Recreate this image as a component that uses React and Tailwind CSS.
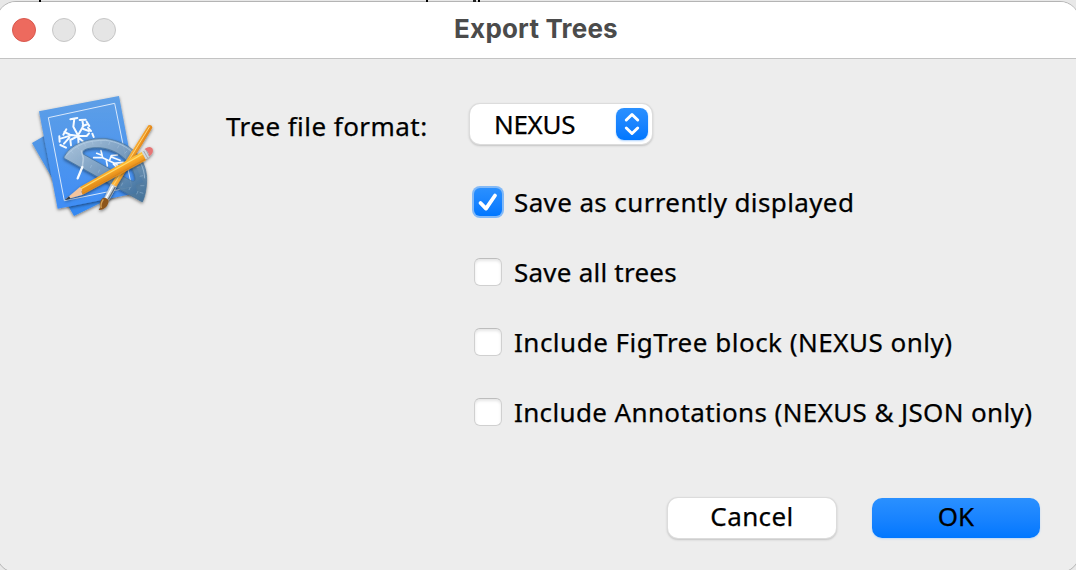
function AppIcon() {
  return (
    <svg className="block h-[145px] w-[150px]" viewBox="0 0 450 435" fill="none">
      <defs>
        <linearGradient id="sheet" x1="0" y1="0" x2="0" y2="1">
          <stop offset="0" stopColor="#5e9fe6" />
          <stop offset="1" stopColor="#3f8df5" />
        </linearGradient>
        <linearGradient id="back" x1="0" y1="0" x2="0" y2="1">
          <stop offset="0" stopColor="#619ee0" />
          <stop offset="1" stopColor="#3388f2" />
        </linearGradient>
        <linearGradient id="glass" x1="0" y1="0" x2="1" y2="1">
          <stop offset="0" stopColor="#b9cfe2" />
          <stop offset="0.5" stopColor="#7c9fc0" />
          <stop offset="1" stopColor="#356894" />
        </linearGradient>
        <linearGradient id="wood" x1="250" y1="255" x2="262" y2="280" gradientUnits="userSpaceOnUse">
          <stop offset="0" stopColor="#ffc83e" />
          <stop offset="0.5" stopColor="#fba928" />
          <stop offset="1" stopColor="#e58f1c" />
        </linearGradient>
        <linearGradient id="handle" x1="330" y1="205" x2="348" y2="214" gradientUnits="userSpaceOnUse">
          <stop offset="0" stopColor="#ffb63b" />
          <stop offset="1" stopColor="#e5891a" />
        </linearGradient>
        <filter id="shade" x="-20%" y="-20%" width="140%" height="140%">
          <feDropShadow dx="0" dy="4" stdDeviation="4" floodColor="#000" floodOpacity="0.5" />
        </filter>
      </defs>
      <path d="M36 174 L250 50 L370 290 L162 393Z" fill="url(#back)" filter="url(#shade)" />
      <path d="M57 79 L297 33 L352 324 L113 371Z" fill="url(#sheet)" filter="url(#shade)" />
      <path d="M85 98 L284 55 L335 306 L133 347Z" stroke="#d8e8fb" strokeWidth="3" />
      <g stroke="#f7fbff" strokeWidth="6" strokeLinecap="round" strokeLinejoin="round">
        <path d="M176 177 L174 151 L160 125 L163 101 M151 103 L172 99 M174 151 L190 123 L187 106 M179 105 L197 104 M188 123 L204 117 M200 110 L208 123 M190 132 L207 138 M204 128 L213 138 M176 153 L200 153 L207 145 M175 153 L150 149 L133 141 M139 133 L130 149 M153 151 L124 160 M118 154 L119 170 M148 158 L132 176 M121 180 L138 188 M172 154 L151 165 L153 181 M176 158 L190 170 M217 146 L221 156" />
        <path d="M221 218 L248 218 L288 237 L304 250 M248 218 L243 197 M246 211 L230 205 M268 228 L274 212 L292 210 M274 216 L300 226 M281 235 L310 232 M259 226 L262 243 M280 237 L295 252" strokeWidth="5" />
      </g>
      <path d="M133 214 C152 178 203 158 258 161 C330 171 382 219 380 287 C379 316 374 337 367 351 L142 225 C134 221 130 219 133 214Z M189 207 L331 286 C348 294 348 282 341 263 C324 215 276 187 229 188 C211 188 183 192 189 207Z" fill="url(#glass)" fillRule="evenodd" fillOpacity="0.88" stroke="#456f96" strokeWidth="2" filter="url(#shade)" />
      <path d="M173 280 L187 246" stroke="#f7fbff" strokeWidth="7" strokeLinecap="round" />
      <path d="M187 246 L190 220 L184 196" stroke="#dfeaf5" strokeWidth="5" opacity="0.45" />
      <path d="M139 211 C168 179 204 165 257 166 C323 174 371 220 374 280" stroke="#c2d9ec" strokeWidth="2" opacity="0.8" />
      <path d="M153 198 l7 7 M171 185 l6 8 M193 175 l4 9 M217 169 l2 10 M243 167 l0 10 M269 171 l-3 9 M297 181 l-5 9 M321 198 l-7 7 M344 220 l-8 5 M359 245 l-9 3 M369 272 l-10 2 M373 302 l-12 0 M370 325 l-11 -3 M350 328 l4 -10 M327 315 l4 -9 M304 302 l4 -9 M281 289 l4 -9 M258 276 l4 -9 M235 263 l4 -9 M211 249 l4 -9 M187 236 l4 -9" stroke="#b3d1ea" strokeWidth="2" opacity="0.55" />
      <g filter="url(#shade)">
        <path d="M385 121 Q396 117 397 128 L288 307 L272 300Z" fill="url(#handle)" />
        <path d="M389 125 L280 301" stroke="#ffd578" strokeWidth="3" />
        <path d="M273 296 L290 305 L264 350 L250 344Z" fill="#c7d0d7" />
        <path d="M278 303 L256 343" stroke="#fff" strokeWidth="4" />
        <path d="M286 306 L265 343" stroke="#5e6972" strokeWidth="4" />
        <path d="M249 339 C240 345 239 357 241 366 L236 375 C252 376 266 363 266 346 C262 340 255 337 249 339Z" fill="#8c551e" />
        <path d="M250 343 Q240 358 244 369" stroke="#d5a054" strokeWidth="4" />
      </g>
      <g filter="url(#shade)">
        <path d="M180 306 L366 200 L378 226 L188 329Z" fill="url(#wood)" />
        <path d="M182 312 L368 207" stroke="#ffdc6c" strokeWidth="4" />
        <path d="M187 326 L377 222" stroke="#cf7f1b" strokeWidth="2" />
        <path d="M180 306 L135 344 L188 329 L184 320 L187 315Z" fill="#f3c49d" />
        <path d="M147 334 L134 346 L152 341Z" fill="#333c46" />
        <path d="M365 201 L381 191 Q391 203 389 214 L377 223Z" fill="#d1d7dc" />
        <path d="M371 198 L383 219 M378 194 L388 214" stroke="#8b9399" strokeWidth="2" />
        <path d="M374 192 Q390 180 398 191 Q402 205 387 214 Q387 200 374 192Z" fill="#e67575" />
      </g>
    </svg>
  );
}

function Checkbox({ checked, label, spacing }) {
  return (
    <label className="flex h-[30px] items-center">
      {checked ? (
        <span className="flex size-[32px] items-center justify-center rounded-[8px] bg-[#82b9f7]">
          <span className="flex size-[28px] items-center justify-center rounded-[6px] bg-linear-to-b from-[#2a90ff] to-[#0077ff]">
            <svg className="size-[28px]" viewBox="0 0 28 28" fill="none">
              <path d="M6.5 15 L12 20.6 L21 7.5" stroke="#fff" strokeWidth="3.8" strokeLinecap="round" strokeLinejoin="round" />
            </svg>
          </span>
        </span>
      ) : (
        <span className="mx-[2px] size-[28px] rounded-[6px] border border-[#d0d0d0] border-t-[#bdbdbd] bg-white shadow-[inset_0_2px_3px_#e6e6e6]" />
      )}
      <span className={`ml-[10px] whitespace-nowrap ${spacing}`}>{label}</span>
    </label>
  );
}

export default function App() {
  return (
    <div className="h-[570px] w-[1076px] overflow-hidden bg-[#e8e8e8] font-['Noto_Sans',sans-serif] text-[26px] leading-[36px] text-black [-webkit-text-stroke:0.25px]">
      <div className="flex h-px">
        <span className="ml-[39px] h-[2px] w-[2px] bg-black" />
        <span className="ml-[385px] h-[2px] w-[2px] bg-black" />
        <span className="ml-[45px] h-[2px] w-[3px] bg-[#222]" />
        <span className="ml-[2px] h-[2px] w-[2px] bg-black" />
      </div>
      <div className="-mx-1 h-[572px] overflow-hidden rounded-[20px] border border-[#b4b4b4] bg-[#ededed]">
        <header className="grid h-[57px] grid-cols-[1fr_auto_1fr] items-center border-b border-[#c3c3c3] bg-white">
          <div className="flex gap-4 pl-[15px]">
            <span className="size-6 rounded-full border border-[#d9584e] bg-[#ed6a5e]" />
            <span className="size-6 rounded-full border border-[#c6c6c6] bg-[#e5e5e5]" />
            <span className="size-6 rounded-full border border-[#c6c6c6] bg-[#e5e5e5]" />
          </div>
          <h1 className="pb-[2px] pr-[4px] font-['Inter',sans-serif] text-[26px] font-bold tracking-[0.2px] text-[#4b4b4b] [-webkit-text-stroke:0px]">Export Trees</h1>
        </header>
        <main className="flex pl-[23px] pt-[26px]">
          <AppIcon />
          <div className="ml-[56px] pt-[18px]">
            <div className="flex h-[42px] items-center">
              <span className="w-[244px] whitespace-nowrap pt-[4px] tracking-[0.45px]">Tree file format:</span>
              <button className="flex h-[40px] w-[182px] items-center justify-between rounded-[10px] bg-white pl-[24px] pr-[4px] shadow-[0_0_0_1px_#dcdcdc,0_1px_2px_1px_#c4c4c4]">
                <span className="tracking-[-0.3px]">NEXUS</span>
                <span className="flex size-8 items-center justify-center rounded-[8px] bg-linear-to-b from-[#2a90ff] to-[#0077ff] shadow-[0_1px_2px_#a9d0ff]">
                  <svg className="size-8" viewBox="0 0 32 32" fill="none">
                    <path d="M10.3 12 L16 6.5 L21.7 12 M10.3 20 L16 25.5 L21.7 20" stroke="#fff" strokeWidth="3" strokeLinecap="round" strokeLinejoin="round" />
                  </svg>
                </span>
              </button>
            </div>
            <div className="ml-[246px] mt-[42px] flex flex-col gap-[40px]">
              <Checkbox checked label="Save as currently displayed" spacing="tracking-[0.38px]" />
              <Checkbox label="Save all trees" spacing="tracking-[0.23px]" />
              <Checkbox label="Include FigTree block (NEXUS only)" spacing="tracking-[0.5px]" />
              <Checkbox label="Include Annotations (NEXUS & JSON only)" spacing="tracking-[0.37px]" />
            </div>
          </div>
        </main>
        <footer className="mt-[71px] flex justify-end gap-[36px] pr-[39px]">
          <button className="h-[40px] w-[168px] rounded-[10px] bg-white pb-[4px] tracking-[0.4px] shadow-[0_0_0_1px_#dcdcdc,0_1px_2px_1px_#c4c4c4]">Cancel</button>
          <button className="h-[40px] w-[168px] rounded-[10px] bg-linear-to-b from-[#2a90ff] to-[#0077ff] pb-[4px] shadow-[0_1px_2px_#bcd8f8]">OK</button>
        </footer>
      </div>
    </div>
  );
}
